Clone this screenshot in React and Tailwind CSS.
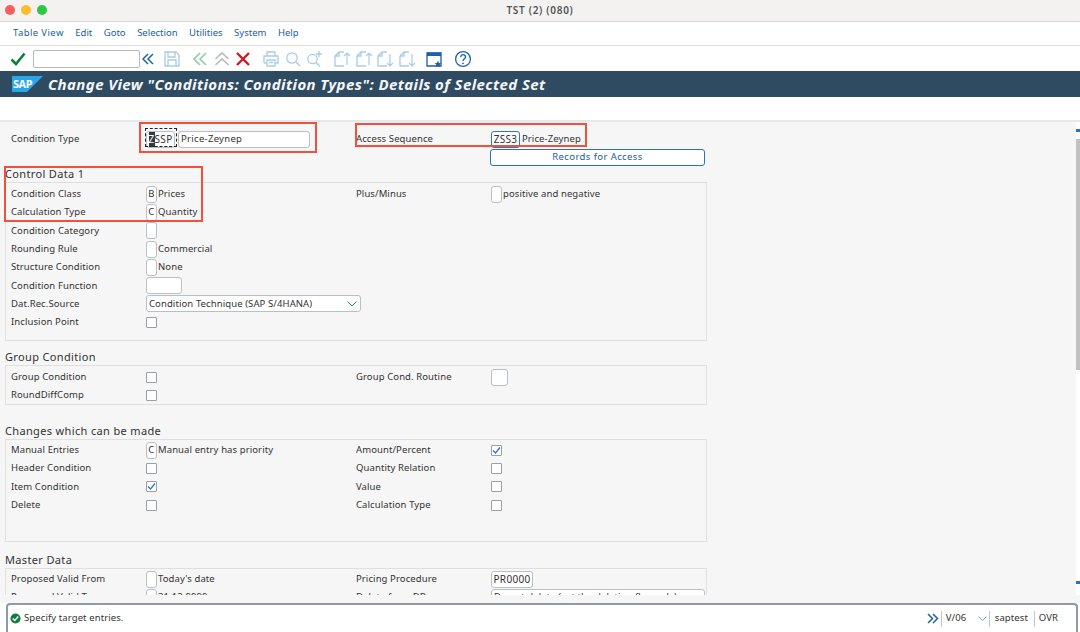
import React from 'react';

const Field = ({ children, className = 'w-[11px]' }) => (
  <div className={`h-[17px] shrink-0 bg-white border border-[#b9bfc6] rounded-[3px] flex items-center justify-center text-[#333] tracking-[0.3px] ${className}`}>
    {children}
  </div>
);

const Check = ({ on }) => (
  <div className="w-[11px] h-[11px] shrink-0 bg-white border border-[#9aa0a6] rounded-[1px] flex items-center justify-center">
    {on && (
      <svg width="9" height="9" viewBox="0 0 9 9">
        <path d="M1 4.5 L3.5 7 L8 1.5" fill="none" stroke="#2b74c8" strokeWidth="1.3" />
      </svg>
    )}
  </div>
);

// one row of a group box: left cell starts at x=11, right cell at x=356
const Row = ({ label, left, text, rLabel, right, rText }) => (
  <div className="h-[18.3px] flex items-center">
    <div className="w-[350px] shrink-0 flex items-center">
      <div className="w-[140px] shrink-0 pl-[5px] whitespace-nowrap">{label}</div>
      {left}
      {text && <span className="ml-[1px] whitespace-nowrap">{text}</span>}
    </div>
    {rLabel && (
      <div className="flex items-center">
        <div className="w-[135px] shrink-0 whitespace-nowrap">{rLabel}</div>
        {right}
        {rText && <span className="ml-[1px] whitespace-nowrap">{rText}</span>}
      </div>
    )}
  </div>
);

const Group = ({ title, box, children, titleMt }) => (
  <div className={titleMt}>
    <div className="h-[16px] pl-[5px] text-[11px] tracking-[0.35px] text-[#333] flex items-center">{title}</div>
    <div className={`ml-[5px] w-[702px] border border-[#dfdfdf] ${box}`}>{children}</div>
  </div>
);

const Icon = ({ ml, children }) => (
  <div className={`w-[18px] h-[18px] shrink-0 flex items-center justify-center ${ml}`}>
    <svg width="18" height="18" viewBox="0 0 18 18" fill="none">{children}</svg>
  </div>
);

const PageIcon = ({ arrow, c = '#a9cbe6' }) => (
  <>
    <path d="M2 6 L6 2 H11 M2 6 V16 H11 M6 2 V6 H2" stroke={c} strokeWidth="1.3" />
    {arrow === 'up' && <path d="M14 15 V3 M11 6 L14 3 L17 6" stroke={c} strokeWidth="1.2" />}
    {arrow === 'down' && <path d="M14 4 V16 M11 13 L14 16 L17 13" stroke={c} strokeWidth="1.2" />}
  </>
);

const Toolbar = () => (
  <div className="h-[25px] bg-white flex items-center">
    <Icon ml="ml-[9px]">
      <path d="M2.5 9.5 L7 14 L15.5 3.5" stroke="#107e3e" strokeWidth="2.6" />
    </Icon>
    <div className="ml-[6px] w-[107px] h-[18px] bg-white border border-[#b4b9be] rounded-[2px]" />
    <Icon ml="ml-[-1px]">
      <path d="M9 4 L4 9 L9 14 M14 4 L9 9 L14 14" stroke="#1f63ad" strokeWidth="1.5" />
    </Icon>
    <Icon ml="ml-[6px]">
      <path d="M2 2 H13 L16 5 V16 H2 Z M5 2 V7 H12 V2 M5 16 V10 H13 V16" stroke="#a9cbe6" strokeWidth="1.3" />
    </Icon>
    <Icon ml="ml-[10px]">
      <path d="M9 3 L3 9 L9 15 M15 3 L9 9 L15 15" stroke="#8fcfa8" strokeWidth="1.7" />
    </Icon>
    <Icon ml="ml-[4px]">
      <path d="M2.5 9 L9 3 L15.5 9 M2.5 15 L9 9 L15.5 15" stroke="#b8bcbf" strokeWidth="1.7" />
    </Icon>
    <Icon ml="ml-[3px]">
      <path d="M3 3 L15 15 M15 3 L3 15" stroke="#d3191f" strokeWidth="2.4" />
    </Icon>
    <Icon ml="ml-[10px]">
      <path d="M5 6 V2 H13 V6 M2 13 V6 H16 V13 H13 M5 13 H2 M5 10 H13 V16 H5 Z M7 12.5 H11" stroke="#a9cbe6" strokeWidth="1.3" />
    </Icon>
    <Icon ml="ml-[4px]">
      <circle cx="8" cy="8" r="5.2" stroke="#a9cbe6" strokeWidth="1.3" />
      <path d="M12 12 L16 16" stroke="#a9cbe6" strokeWidth="1.5" />
    </Icon>
    <Icon ml="ml-[3px]">
      <circle cx="7.5" cy="9" r="4.7" stroke="#a9cbe6" strokeWidth="1.3" />
      <path d="M11 12.5 L15 16.5 M14 1 V7 M11 4 H17" stroke="#a9cbe6" strokeWidth="1.3" />
    </Icon>
    <Icon ml="ml-[10px]"><PageIcon arrow="up" /></Icon>
    <Icon ml="ml-[4px]"><PageIcon arrow="up" /></Icon>
    <Icon ml="ml-[3px]"><PageIcon arrow="down" /></Icon>
    <Icon ml="ml-[4px]"><PageIcon arrow="down" /></Icon>
    <Icon ml="ml-[9px]">
      <path d="M2 3 H16 V16 H2 Z" stroke="#1f5ea8" strokeWidth="1.3" />
      <path d="M2 2.5 H16 V6 H2 Z" fill="#1f5ea8" />
      <path d="M13 10.5 L14 13 L16.5 13.2 L14.6 14.8 L15.3 17.3 L13 16 L10.7 17.3 L11.4 14.8 L9.5 13.2 L12 13 Z" fill="#1f5ea8" />
    </Icon>
    <Icon ml="ml-[11px]">
      <circle cx="9" cy="9" r="7.4" stroke="#1f63ad" strokeWidth="1.3" />
      <path d="M6.7 7 C6.7 3.8 11.5 3.9 11.5 7 C11.5 9 9 9 9 11" stroke="#1f63ad" strokeWidth="1.4" />
      <circle cx="9" cy="13.3" r="0.9" fill="#1f63ad" />
    </Icon>
  </div>
);

const RedBox = ({ className }) => (
  <div className={`absolute border-2 border-[#f0503c] pointer-events-none ${className}`} />
);

export default function App() {
  return (
    <div className="relative w-[1080px] h-[632px] overflow-hidden flex flex-col bg-white text-[9.5px] text-[#333] tracking-[0.1px] [font-family:'Noto_Sans',sans-serif]">
      {/* window title */}
      <div className="relative h-[22px] shrink-0 bg-[#f3f2f1] border-b border-[#d8d8d8] flex items-center justify-center">
        <div className="absolute left-[5px] top-[5px] flex gap-[6px]">
          <div className="w-[10px] h-[10px] rounded-full bg-[#f7605a]" />
          <div className="w-[10px] h-[10px] rounded-full bg-[#fbbc30]" />
          <div className="w-[10px] h-[10px] rounded-full bg-[#2bc840]" />
        </div>
        <span className="text-[10px] font-semibold text-[#555] tracking-[0.7px]">TST (2) (080)</span>
      </div>

      {/* menu */}
      <div className="h-[24px] shrink-0 bg-white border-b border-[#e2e2e2] flex items-center gap-[11.5px] pl-[13px] text-[#1b5da5] tracking-[0px]">
        <span className="tracking-[0.4px]">Table View</span>
        <span>Edit</span>
        <span>Goto</span>
        <span>Selection</span>
        <span>Utilities</span>
        <span>System</span>
        <span>Help</span>
      </div>

      <Toolbar />

      {/* title bar */}
      <div className="relative h-[26px] shrink-0 bg-[#2f4b61] flex items-center pl-[12px]">
        <svg width="31" height="16" viewBox="0 0 31 16">
          <path d="M0 0 H31 L15 16 H0 Z" fill="#2ba6e8" />
        </svg>
        <span className="absolute left-[13px] top-[5px] text-[11px] font-bold text-white tracking-[-0.5px]">SAP</span>
        <span className="ml-[5px] text-[15px] font-bold italic text-[#f4f6f8] tracking-[0.4px] whitespace-nowrap">
          Change View "Conditions: Condition Types": Details of Selected Set
        </span>
      </div>

      <div className="h-[25px] shrink-0 bg-white border-b-2 border-[#e8e8e8]" />

      {/* details, the scrolling part stops 8px above the status bar */}
      <div className="flex-1 min-h-0 bg-[#f6f6f6]">
        <div className="h-[473px] overflow-hidden flex">
          <div className="flex-1 min-w-0 pt-[8px]">
            <div className="h-[18px] flex items-center">
              <div className="w-[146px] pl-[11px]">Condition Type</div>
              <Field className="w-[29px] text-[10px]">
                <span className="bg-[#2f3b47] text-white">Z</span>SSP
              </Field>
              <Field className="w-[132px] ml-[3px] !justify-start pl-[2px]">Price-Zeynep</Field>
              <div className="w-[46px]" />
              <div className="w-[135px]">Access Sequence</div>
              <Field className="w-[29px] !border-[#2f78b8] text-[10px]">ZSS3</Field>
              <span className="ml-[2px]">Price-Zeynep</span>
            </div>
            <div className="h-[18px] flex items-center">
              <button className="ml-[490px] w-[215px] h-[17px] bg-white border border-[#2b74b8] rounded-[3px] text-[#1b5da5] tracking-[0.4px]">
                Records for Access
              </button>
            </div>

            <Group title="Control Data 1" box="h-[159px] pt-[2px]">
              <Row label="Condition Class" left={<Field>B</Field>} text="Prices" rLabel="Plus/Minus" right={<Field />} rText="positive and negative" />
              <Row label="Calculation Type" left={<Field>C</Field>} text="Quantity" />
              <Row label="Condition Category" left={<Field />} />
              <Row label="Rounding Rule" left={<Field />} text="Commercial" />
              <Row label="Structure Condition" left={<Field />} text="None" />
              <Row label="Condition Function" left={<Field className="w-[36px]" />} />
              <Row
                label="Dat.Rec.Source"
                left={
                  <div className="w-[215px] h-[17px] shrink-0 bg-white border border-[#b9bfc6] rounded-[3px] flex items-center justify-between pl-[2px] pr-[3px]">
                    <span>Condition Technique (SAP S/4HANA)</span>
                    <svg width="10" height="6" viewBox="0 0 10 6"><path d="M0.5 0.5 L5 5 L9.5 0.5" fill="none" stroke="#2b74b8" /></svg>
                  </div>
                }
              />
              <Row label="Inclusion Point" left={<Check />} />
            </Group>

            <Group title="Group Condition" box="h-[40px] pt-[2px]" titleMt="mt-[8px]">
              <Row label="Group Condition" left={<Check />} rLabel="Group Cond. Routine" right={<Field className="w-[17px]" />} />
              <Row label="RoundDiffComp" left={<Check />} />
            </Group>

            <Group title="Changes which can be made" box="h-[103px] pt-[1px]" titleMt="mt-[18px]">
              <Row label="Manual Entries" left={<Field>C</Field>} text="Manual entry has priority" rLabel="Amount/Percent" right={<Check on />} />
              <Row label="Header Condition" left={<Check />} rLabel="Quantity Relation" right={<Check />} />
              <Row label="Item Condition" left={<Check on />} rLabel="Value" right={<Check />} />
              <Row label="Delete" left={<Check />} rLabel="Calculation Type" right={<Check />} />
            </Group>

            <Group title="Master Data" box="h-[60px] pt-[1px]" titleMt="mt-[10px]">
              <Row label="Proposed Valid From" left={<Field />} text="Today's date" rLabel="Pricing Procedure" right={<Field className="w-[42px] text-[10px]">PR0000</Field>} />
              <Row
                label="Proposed Valid To"
                left={<Field />}
                text="31.12.9999"
                rLabel="Delete from DB"
                right={<div className="w-[214px] h-[17px] shrink-0 bg-white border border-[#b9bfc6] rounded-[3px] pl-[2px] whitespace-nowrap overflow-hidden">Do not delete (set the deletion flag only)</div>}
              />
            </Group>
          </div>

          {/* scrollbar */}
          <div className="w-[4px] shrink-0 bg-white flex flex-col">
            <div className="h-[17px] flex items-center">
              <div className="w-[4px] h-[3px] bg-[#2b74b8]" />
            </div>
            <div className="h-[231px] bg-[#c2c2c2]" />
            <div className="flex-1" />
            <div className="h-[14px]">
              <div className="w-[4px] h-[3px] bg-[#2b74b8]" />
            </div>
          </div>
        </div>
      </div>

      {/* status bar */}
      <div className="h-[29px] shrink-0 ml-[6px] mr-[2px] bg-white border-2 border-b-0 border-[#8f9aa6] rounded-t-[4px] flex items-center text-[#333]">
        <svg className="ml-[2px]" width="11" height="11" viewBox="0 0 12 12">
          <circle cx="6" cy="6" r="5.5" fill="#107e3e" />
          <path d="M3 6 L5.2 8.2 L9 3.8" fill="none" stroke="#fff" strokeWidth="1.5" />
        </svg>
        <span className="ml-[3px]">Specify target entries.</span>
        <div className="flex-1" />
        <svg width="12" height="11" viewBox="0 0 12 11">
          <path d="M1 1 L5.5 5.5 L1 10 M6 1 L10.5 5.5 L6 10" fill="none" stroke="#1f63ad" strokeWidth="1.5" />
        </svg>
        <div className="ml-[2px] w-px h-[16px] bg-[#c4c4c4]" />
        <span className="ml-[4px] w-[32px]">V/06</span>
        <svg width="9" height="6" viewBox="0 0 9 6"><path d="M0.5 0.5 L4.5 4.5 L8.5 0.5" fill="none" stroke="#6ea3d3" /></svg>
        <div className="ml-[2px] w-px h-[16px] bg-[#c4c4c4]" />
        <span className="ml-[5px] w-[39px]">saptest</span>
        <div className="w-px h-[16px] bg-[#c4c4c4]" />
        <span className="ml-[4px] mr-[18px]">OVR</span>
      </div>

      {/* annotations drawn over the screenshot */}
      <RedBox className="left-[139px] top-[122px] w-[178px] h-[31px]" />
      <RedBox className="left-[355px] top-[123px] w-[232px] h-[24px]" />
      <RedBox className="left-[4px] top-[166px] w-[199px] h-[56px]" />
      <div className="absolute left-[145px] top-[128px] w-[32px] h-[19px] border border-dashed border-[#222] pointer-events-none" />
    </div>
  );
}
